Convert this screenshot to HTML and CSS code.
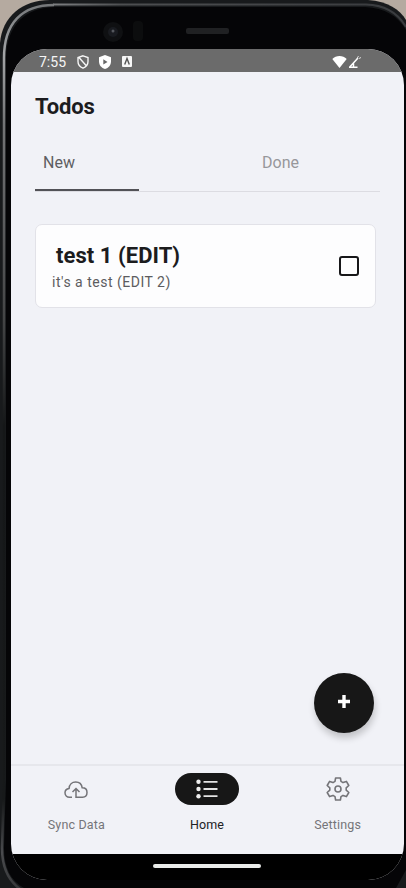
FILE: index.html
```html
<!DOCTYPE html>
<html lang="en">
<head>
<meta charset="utf-8">
<title>Todos</title>
<link rel="stylesheet" href="styles.css">
</head>
<body>
<div class="device">
  <svg class="frame" width="406" height="888" viewBox="0 0 406 888" aria-hidden="true">
    <defs>
      <linearGradient id="rim" x1="0" y1="0" x2="0" y2="888" gradientUnits="userSpaceOnUse">
        <stop offset="0" stop-color="#727476"/><stop offset=".06" stop-color="#a2a4a6"/><stop offset=".14" stop-color="#737476"/>
        <stop offset=".36" stop-color="#444546"/><stop offset=".48" stop-color="#151718"/><stop offset=".9" stop-color="#17191a"/><stop offset=".96" stop-color="#4a4b4e"/><stop offset="1" stop-color="#38393b"/>
      </linearGradient>
      <linearGradient id="rimTop" x1="0" y1="0" x2="406" y2="0" gradientUnits="userSpaceOnUse">
        <stop offset="0" stop-color="#a2a4a6"/><stop offset=".3" stop-color="#4d4f51"/><stop offset="1" stop-color="#393b3e"/>
      </linearGradient>
    </defs>
    <path d="M0 888V43C2 17 22 0 50 0H368C388 1 400 10 406 20V888Z" fill="#181a1c"/>
    <path d="M20 889C9 881 2 868 2 848L4 780V58C4 23 22 5 54 5" fill="none" stroke="url(#rim)" stroke-width="2.500"/>
    <path d="M53 4.500H366C386 5 398 13 406 27" fill="none" stroke="url(#rimTop)" stroke-width="2"/>
    <path d="M24 888C11 881 4 868 4 848L6 780V58C7 26 24 7 56 7H365C385 8 398 16 406 30V870L396 888Z" fill="#050507"/>
    <circle cx="113" cy="32" r="10" fill="#0f1012"/><circle cx="113" cy="32" r="5" fill="#191b20"/><circle cx="113" cy="31" r="1.500" fill="#55585e"/>
    <rect x="133" y="21" width="10" height="20" rx="4" fill="#0c0d0e"/>
    <rect x="186" y="28" width="43" height="6" rx="2" fill="#202123"/>
  </svg>

  <div class="screen">
    <header class="status">
      <span class="clock">7:55</span>
      <svg class="shield" width="12" height="14" viewBox="0 0 12 14"><path d="M6 .8 11 2.600V6.500C11 9.700 9 12 6 13.200 3 12 1 9.700 1 6.500V2.600ZM2 2.500 9.500 11" fill="none" stroke="#f5f5f5" stroke-width="1.400"/></svg>
      <svg class="play" width="12" height="14" viewBox="0 0 12 14"><path d="M6 0 12 2.300V6.500C12 10 9.600 13 6 14 2.400 13 0 10 0 6.500V2.300Z" fill="#fff"/><path d="M4.300 4.300 8.500 7 4.300 9.500Z" fill="#666"/></svg>
      <svg class="badge" width="10" height="11" viewBox="0 0 10 11"><rect width="10" height="11" rx="1" fill="#f7f7f7"/><path d="M2.700 8.500 5 2.500 7.300 8.500" fill="none" stroke="#555" stroke-width="1.400"/></svg>
      <svg class="signal" width="30" height="14" viewBox="0 0 30 14"><path d="M.3 4C4 .1 11 .1 14.700 4L7.500 12.900Z" fill="#fff"/><path d="M17.500 12.200 26 3M17 12.200H25.500M21.500 12V8.500" fill="none" stroke="#fff" stroke-width="1.500"/><path d="m25 3.500 1.500-2.500M27 3.500l2-1" stroke="#ddd"/></svg>
    </header>

    <main class="content">
      <h1>Todos</h1>
      <nav class="tabs">
        <a class="tab active">New</a>
        <a class="tab done">Done</a>
      </nav>
      <article class="card">
        <div class="info">
          <h2>test 1 (EDIT)</h2>
          <p>it's a test (EDIT 2)</p>
        </div>
        <span class="check"></span>
      </article>
      <button class="fab" aria-label="Add"><svg width="12" height="13" viewBox="0 0 12 13"><path d="M6 0V13M0 6.500H12" stroke="#fff" stroke-width="3.400"/></svg></button>
    </main>

    <nav class="bottom">
      <a class="item">
        <span class="pill"><svg class="cloud" width="24" height="18" viewBox="0 0 24 18"><path d="M8 16.200H5.500C2.800 16.200 1 14.200 1 11.800 1 9.400 2.700 7.700 5.100 7.400 5.300 3.600 8 1 11.700 1 15.200 1 17.700 3.400 18.200 6.800 21.400 6.800 23 8.900 23 11.500 23 14.300 21.100 16.200 18.600 16.200H12V7.500M8.500 11 12 7.500 15.500 11" fill="none" stroke="#747478" stroke-width="1.500"/></svg></span>
        <span>Sync Data</span>
      </a>
      <a class="item current">
        <span class="pill"><svg width="22" height="20" viewBox="0 0 22 20"><g fill="#eee"><circle cx="2.500" cy="2.800" r="2.200"/><circle cx="2.500" cy="10" r="2.200"/><circle cx="2.500" cy="17.200" r="2.200"/></g><path d="M7.500 2.800H21.500M7.500 10H21.500M7.500 17.200H21.500" stroke="#e5e5e5" stroke-width="1.800"/></svg></span>
        <span>Home</span>
      </a>
      <a class="item">
        <span class="pill"><svg width="24" height="24" viewBox="0 0 24 24" fill="none" stroke="#747478" stroke-width="1.600" stroke-linejoin="round"><path d="M9.600 1H14.400L15 4.400 17 5.600 20.400 4.400 22.800 8.500 20.200 10.800V13.200L22.800 15.500 20.400 19.600 17 18.400 15 19.600 14.400 23H9.600L9 19.600 7 18.400 3.600 19.600 1.200 15.500 3.800 13.200V10.800L1.200 8.500 3.600 4.400 7 5.600 9 4.400Z"/><circle cx="12" cy="12" r="3"/></svg></span>
        <span>Settings</span>
      </a>
    </nav>
    <footer class="gesture"><span></span></footer>
  </div>
</div>
</body>
</html>
```
FILE: styles.css
```css
* { box-sizing: border-box; }
body { margin: 0; background: #b5aaa0; font-family: Roboto, sans-serif; overflow: hidden; }
.device { position: relative; width: 406px; height: 888px; padding: 49px 2px 8px 11px; }
.frame { position: absolute; left: 0; top: 0; }
.screen { position: relative; height: 831px; display: flex; flex-direction: column; background: #f1f2f7; border-radius: 36px; overflow: hidden; }
.status { height: 23px; background: #6b6b6b; display: flex; align-items: center; padding: 2px 42px 0 28px; color: #f5f5f5; flex: none; }
.clock { font-size: 14px; width: 38px; }
.play { margin-left: 10px; }
.badge { margin-left: 11px; }
.signal { margin-left: auto; }
.content { flex: 1; padding: 22px 24px 0; display: flex; flex-direction: column; color: #1c1c1e; }
h1 { margin: 0; font-size: 22px; line-height: 26px; font-weight: 700; letter-spacing: -.1px; }
.tabs { height: 52px; margin-top: 20px; display: flex; border-bottom: 1px solid #dcdce2; }
.tab { padding: 13px 8px 0; font-size: 16px; line-height: 20px; color: #97979b; }
.tab.active { width: 104px; color: #5e5e62; border-bottom: 2px solid #525257; }
.tab.done { margin-left: 115px; }
.card { width: 341px; height: 84px; margin-top: 32px; border: 1px solid #e2e2e8; border-radius: 7px; background: #fdfdfe; display: flex; align-items: center; justify-content: space-between; padding: 0 16px 0 16px; }
h2 { margin: 0 0 0 4px; font-size: 22px; line-height: 28px; font-weight: 700; letter-spacing: .05px; }
p { margin: 3px 0 0; font-size: 14px; line-height: 18px; color: #5c5c60; letter-spacing: .5px; }
.check { width: 20px; height: 20px; border: 2px solid #171719; border-radius: 3px; }
.fab { width: 60px; height: 60px; margin: auto 6px 31px auto; padding: 0 0 3px; border: 0; border-radius: 50%; background: #171717; display: grid; place-items: center; box-shadow: 1px 5px 7px #0003; }
.bottom { height: 90px; border-top: 2px solid #e6e7ec; display: flex; flex: none; padding-right: 1px; }
.item { flex: 1; display: flex; flex-direction: column; align-items: center; padding-top: 7px; color: #757579; font-size: 12.5px; letter-spacing: .15px; line-height: 16px; gap: 12px; }
.current { color: #222225; }
.pill { width: 64px; height: 32px; border-radius: 16px; display: grid; place-items: center; }
.cloud { margin-top: 2px; }
.current .pill { background: #171717; }
.gesture { height: 26px; flex: none; background: #000; padding-top: 10px; }
.gesture span { display: block; width: 108px; height: 4px; border-radius: 2px; background: #e9ebe9; margin-left: 142px; }
```
